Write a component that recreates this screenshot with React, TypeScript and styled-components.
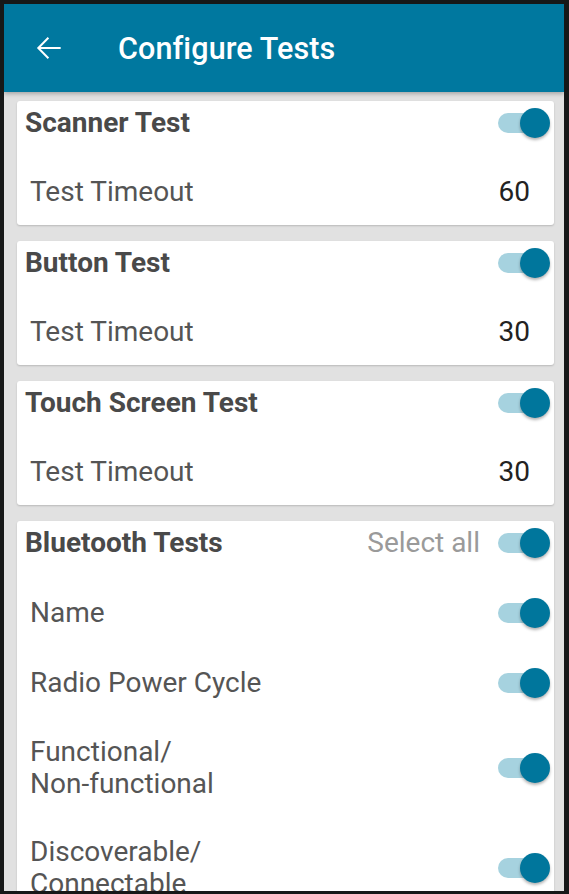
import React from "react";
import styled, { createGlobalStyle } from "styled-components";

const Global = createGlobalStyle`
  html, body { margin: 0; padding: 0; background: #151515; }
  body { font-family: Roboto, "Noto Sans", sans-serif; -webkit-font-smoothing: antialiased; }
  * { box-sizing: border-box; }
`;

const Frame = styled.div`
  width: 569px;
  height: 894px;
  padding: 4px 5px 3px 4px;
  background: #161818;
`;

const Screen = styled.div`
  height: 100%;
  background: #e1e1e1;
  display: flex;
  flex-direction: column;
  overflow: hidden;
`;

const AppBar = styled.header`
  flex: 0 0 88px;
  background: #00789f;
  display: flex;
  align-items: center;
  padding-left: 25px;
  box-shadow: 0 2px 4px rgba(0, 0, 0, 0.25);
  position: relative;
  z-index: 1;
`;

const BackButton = styled.button`
  width: 38px;
  height: 38px;
  padding: 0;
  border: 0;
  background: transparent;
  display: flex;
  align-items: center;
  justify-content: center;
`;

const Title = styled.h1`
  margin: 0 0 0 51px;
  color: #ffffff;
  font-family: Roboto, sans-serif;
  font-weight: 500;
  font-size: 30.5px;
  letter-spacing: 0.1px;
`;

const Content = styled.main`
  flex: 1;
  padding: 9px 10px 0 13px;
  display: flex;
  flex-direction: column;
  gap: 16px;
`;

const Card = styled.section`
  background: #ffffff;
  border-radius: 3px;
  box-shadow: 0 1px 2px rgba(0, 0, 0, 0.18);
  display: flex;
  flex-direction: column;
  flex-shrink: 0;
`;

const CardHeader = styled.div`
  height: 43px;
  display: flex;
  align-items: center;
  padding: 0 4px 0 8px;
`;

const CardTitle = styled.h2`
  flex: 1;
  margin: 0;
  font-size: 28px;
  line-height: 32px;
  font-weight: 700;
  color: #494949;
`;

const SelectAll = styled.span`
  font-size: 28px;
  line-height: 32px;
  color: #9a9a9a;
  margin-right: 18px;
`;

const Rows = styled.div`
  padding-top: 13px;
  display: flex;
  flex-direction: column;
`;

const Row = styled.div<{ $minH?: number }>`
  min-height: ${(p) => p.$minH ?? 70}px;
  padding: 19px 4px 17px 13px;
  display: flex;
  align-items: center;
`;

const Label = styled.span`
  flex: 1;
  font-size: 28px;
  line-height: 32px;
  color: #555555;
`;

const Value = styled.span`
  font-size: 28px;
  line-height: 32px;
  color: #222222;
  margin-right: 20px;
`;

const ToggleWrap = styled.span`
  position: relative;
  display: inline-block;
  width: 52px;
  height: 30px;
  flex-shrink: 0;
`;

const Track = styled.span`
  position: absolute;
  left: 0;
  top: 5px;
  width: 46px;
  height: 20px;
  border-radius: 10px;
  background: #a6d2df;
`;

const Thumb = styled.span`
  position: absolute;
  right: 0;
  top: 0;
  width: 30px;
  height: 30px;
  border-radius: 50%;
  background: #00769c;
  box-shadow: 0 2px 3px rgba(0, 0, 0, 0.3);
`;

const Toggle = () => (
  <ToggleWrap>
    <Track />
    <Thumb />
  </ToggleWrap>
);

const BackArrow = () => (
  <svg width="38" height="38" viewBox="0 0 24 24" fill="#ffffff">
    <path d="M20 11.3H7.4l5.3-5.3-0.9-0.9L5 12l6.8 6.9 0.9-0.9-5.3-5.3H20z" />
  </svg>
);

const simpleTests = [
  { name: "Scanner Test", timeout: "60" },
  { name: "Button Test", timeout: "30" },
  { name: "Touch Screen Test", timeout: "30" },
];

const bluetooth = [
  ["Name"],
  ["Radio Power Cycle"],
  ["Functional/", "Non-functional"],
  ["Discoverable/", "Connectable"],
];

export default function App() {
  return (
    <>
      <Global />
      <Frame>
        <Screen>
          <AppBar>
            <BackButton aria-label="Back">
              <BackArrow />
            </BackButton>
            <Title>Configure Tests</Title>
          </AppBar>
          <Content>
            {simpleTests.map((t) => (
              <Card key={t.name}>
                <CardHeader>
                  <CardTitle>{t.name}</CardTitle>
                  <Toggle />
                </CardHeader>
                <Rows>
                  <Row $minH={68}>
                    <Label>Test Timeout</Label>
                    <Value>{t.timeout}</Value>
                  </Row>
                </Rows>
              </Card>
            ))}
            <Card>
              <CardHeader>
                <CardTitle>Bluetooth Tests</CardTitle>
                <SelectAll>Select all</SelectAll>
                <Toggle />
              </CardHeader>
              <Rows>
                {bluetooth.map((lines) => (
                  <Row key={lines.join("")}>
                    <Label>
                      {lines.map((l, i) => (
                        <React.Fragment key={l}>
                          {i > 0 && <br />}
                          {l}
                        </React.Fragment>
                      ))}
                    </Label>
                    <Toggle />
                  </Row>
                ))}
              </Rows>
            </Card>
          </Content>
        </Screen>
      </Frame>
    </>
  );
}
